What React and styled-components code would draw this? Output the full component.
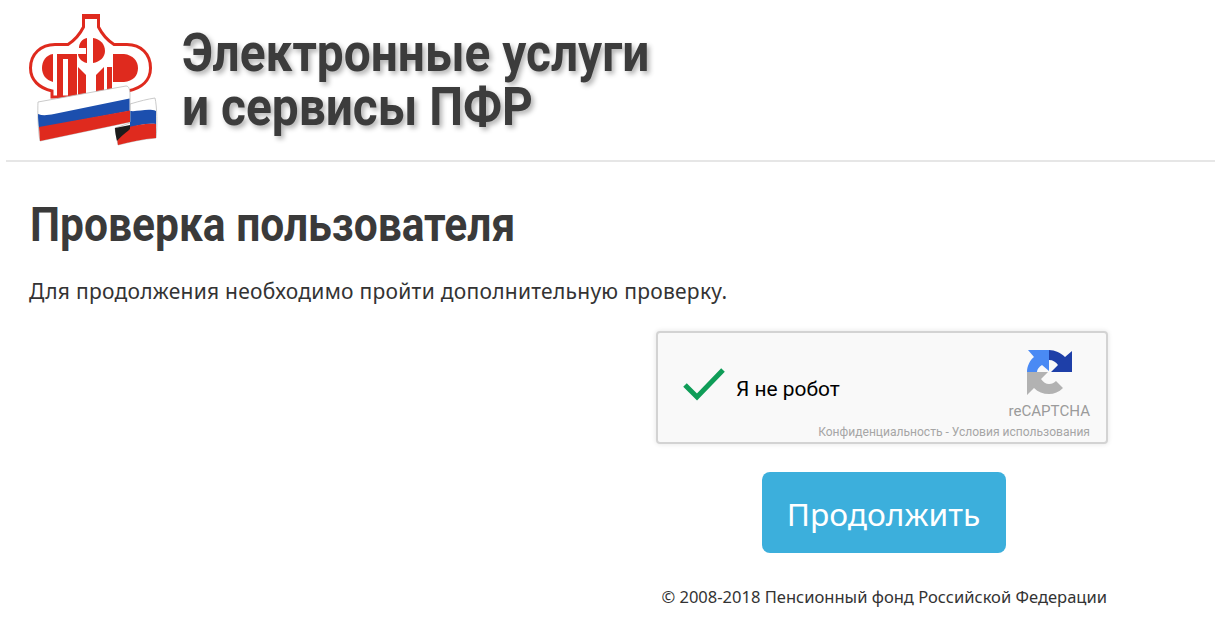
import React from 'react';
import styled, { createGlobalStyle } from 'styled-components';

const GlobalStyle = createGlobalStyle`
  html, body {
    margin: 0;
    padding: 0;
    background: #fff;
  }
  body {
    font-family: "Noto Sans", "Open Sans", sans-serif;
    color: #333;
  }
`;

const Page = styled.div`
  width: 1215px;
  height: 623px;
  overflow: hidden;
  padding-left: 6px;
  box-sizing: border-box;
`;

const Header = styled.header`
  display: flex;
  align-items: flex-start;
  gap: 22px;
  height: 147px;
  padding: 13px 0 0 22px;
  border-bottom: 2px solid #e6e6e6;
`;

const Brand = styled.div`
  font-family: "Roboto", sans-serif;
  font-weight: 700;
  font-size: 54px;
  line-height: 54px;
  margin-top: 13px;
  color: #3c3c3c;
  text-shadow: 3px 3px 6px rgba(0, 0, 0, 0.3);
  white-space: nowrap;
  transform: scaleX(0.886);
  transform-origin: left top;
`;

const Main = styled.main`
  display: flex;
  flex-direction: column;
  padding: 0 0 0 24px;
`;

const Title = styled.h1`
  font-family: "Roboto", sans-serif;
  font-weight: 700;
  font-size: 48px;
  line-height: 54px;
  margin: 36px 0 0;
  color: #3a3a3a;
  white-space: nowrap;
  transform: scaleX(0.886);
  transform-origin: left top;
`;

const Lead = styled.p`
  font-size: 21px;
  letter-spacing: 0.27px;
  line-height: 28px;
  margin: 25px 0 0 -1px;
  white-space: nowrap;
`;

const Form = styled.form`
  align-self: flex-end;
  width: 452px;
  margin: 26px 107px 0 0;
  display: flex;
  flex-direction: column;
  align-items: center;
`;

const Captcha = styled.div`
  width: 452px;
  height: 113px;
  box-sizing: border-box;
  padding: 17px 16px 0 24px;
  display: flex;
  flex-direction: column;
  background: #f9f9f9;
  border: 2px solid #d3d3d3;
  border-radius: 4px;
  box-shadow: 0 0 4px 1px rgba(0, 0, 0, 0.08);
  font-family: "Roboto", sans-serif;
`;

const CaptchaRow = styled.div`
  display: flex;
  justify-content: space-between;
`;

const CaptchaLabel = styled.label`
  display: flex;
  align-items: center;
  gap: 10px;
  margin-top: 8px;
  font-size: 20.9px;
  color: #000;
`;

const CaptchaBrand = styled.div`
  display: flex;
  flex-direction: column;
  align-items: center;
  gap: 7px;
  font-size: 15.1px;
  line-height: 17px;
  color: #9b9b9b;
`;

const CaptchaLinks = styled.div`
  text-align: right;
  font-size: 12.05px;
  line-height: 14px;
  margin-top: 5px;
  color: #a6a6a6;
`;

const Submit = styled.button`
  width: 244px;
  height: 81px;
  margin: 28px 0 0 3px;
  padding: 2px 0 0;
  border: 0;
  border-radius: 8px;
  background: #3cafdc;
  color: #fff;
  font-family: inherit;
  font-size: 31.7px;
`;

const Copyright = styled.div`
  align-self: flex-end;
  margin: 33px 1px 0 0;
  font-size: 16.55px;
  line-height: 22px;
  white-space: nowrap;
`;

function Logo() {
  const red = '#df2a1e';
  return (
    <svg width="132" height="134" viewBox="28 12 132 134">
      <path
        d="M52 96V90C39 87 30.500 79 30.500 67C30.500 53 41 43.500 55 43.500H68C75 39 80 33 83.500 26V14.500H98.500V26C102 33 107 39 114 43.500H127C141 43.500 150.500 53 150.500 67C150.500 79 142 87 128 90V96Z"
        fill="#fff" stroke={red} strokeWidth="3"
      />
      <rect x="82" y="13" width="18" height="5" fill={red} />
      {/* П */}
      <path d="M53 53C46 54 42 60 42 67C42 74 46 79 53 81Z" fill={red} />
      <path d="M57 53H77V98H68V58H63V98H57Z" fill={red} />
      {/* Ф */}
      <path d="M87 37V62C81 61 78 56 78 53H86V47H79C79 42 82 38 87 37Z" fill={red} />
      <path d="M93 37C100 38 105 43 105 50C105 56 100 61 93 62Z" fill={red} />
      <path d="M78 66L86 74V98H78Z" fill={red} />
      <path d="M104 66L96 74V98H104Z" fill={red} />
      {/* Р */}
      <path d="M113 53H124C133 54 138 60 138 67C138 75 133 80 124 81H113Z" fill={red} />
      <path d="M107 66H112V98H107Z" fill={red} />
      {/* back ribbon */}
      <path d="M130 103C140 100 148 98 155 97C157 105 157.500 125 156 137C143 138 130 141 118 144L115 127L130 122Z" fill="#fff" stroke="#bdbdbd" strokeWidth="0.8" />
      <path d="M130 110C138 111 148 107 156 110V123C147 122 138 124 130 127Z" fill="#1c4fae" />
      <path d="M129 126C138 124 147 122 156 123V137C143 138 130 141 118 144L117 137Z" fill={red} />
      <path d="M115 127L130 124V128C127 131 121 135 117 140C116 136 115 131 115 127Z" fill="#1c1c1c" />
      {/* front ribbon */}
      <path d="M38 101L126 85C129 85 129.500 88 130 92V121L40 140C38 130 37.500 110 38 101Z" fill="#fff" stroke="#bdbdbd" strokeWidth="0.8" />
      <path d="M38 113C43 115 48 114 54 113L129.500 97.500V110L39 127C38.500 122 38 118 38 113Z" fill="#1c4fae" />
      <path d="M39 126L130 109.500V121L40 140Z" fill={red} />
    </svg>
  );
}

function RecaptchaIcon() {
  return (
    <svg width="46" height="46" viewBox="0 0 46 46">
      <path d="M23 0C29 0 35 3 39 7L46 1V22H25L32 15C30 12 27 10 23 10Z" fill="#1e3fa8" />
      <path d="M1 22C1 16 4 10 8 7L2 0H23V21L16 15C13 17 11 19 11 22Z" fill="#4a8af4" />
      <path d="M1 22H22L15 29C17 32 20 34 23 34C26 34 28 33 30 31L37 38C33 42 28 44 23 44C17 44 12 42 8 38L1 45Z" fill="#b2b2b2" />
    </svg>
  );
}

function CheckMark() {
  return (
    <svg width="44" height="44" viewBox="0 0 44 44">
      <path d="M3 18L15 30L41 3" fill="none" stroke="#0f9d58" strokeWidth="5" />
    </svg>
  );
}

export default function App() {
  return (
    <Page>
      <GlobalStyle />
      <Header>
        <Logo />
        <Brand>
          Электронные услуги
          <br />
          и сервисы ПФР
        </Brand>
      </Header>
      <Main>
        <Title>Проверка пользователя</Title>
        <Lead>Для продолжения необходимо пройти дополнительную проверку.</Lead>
        <Form>
          <Captcha>
            <CaptchaRow>
              <CaptchaLabel>
                <CheckMark />
                Я не робот
              </CaptchaLabel>
              <CaptchaBrand>
                <RecaptchaIcon />
                reCAPTCHA
              </CaptchaBrand>
            </CaptchaRow>
            <CaptchaLinks>Конфиденциальность - Условия использования</CaptchaLinks>
          </Captcha>
          <Submit type="button">Продолжить</Submit>
          <Copyright>© 2008-2018 Пенсионный фонд Российской Федерации</Copyright>
        </Form>
      </Main>
    </Page>
  );
}
